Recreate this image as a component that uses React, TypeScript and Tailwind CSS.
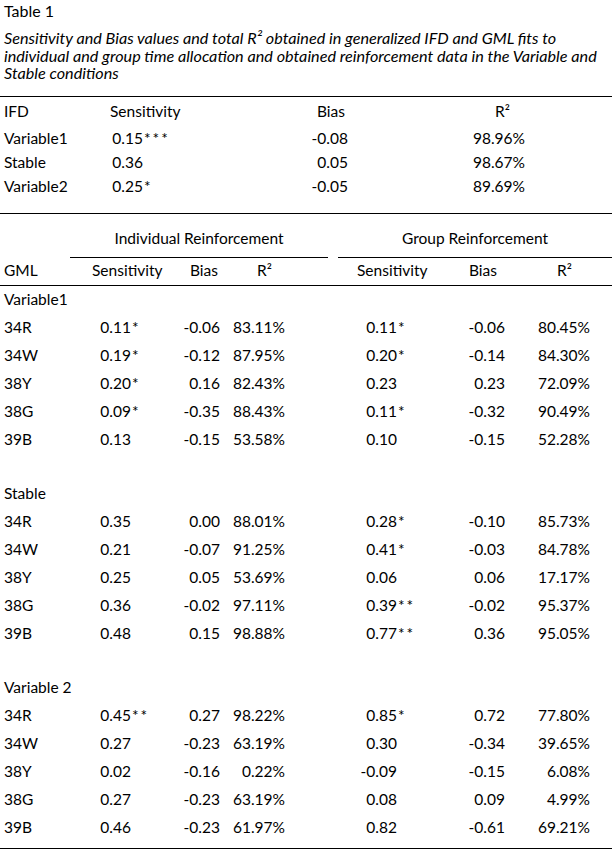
import React from 'react';

type Row2 = [string, string, string, string, string, string, string];

const variable1: Row2[] = [
  ['34R', '0.11*', '-0.06', '83.11%', '0.11*', '-0.06', '80.45%'],
  ['34W', '0.19*', '-0.12', '87.95%', '0.20*', '-0.14', '84.30%'],
  ['38Y', '0.20*', '0.16', '82.43%', '0.23', '0.23', '72.09%'],
  ['38G', '0.09*', '-0.35', '88.43%', '0.11*', '-0.32', '90.49%'],
  ['39B', '0.13', '-0.15', '53.58%', '0.10', '-0.15', '52.28%'],
];

const stable: Row2[] = [
  ['34R', '0.35', '0.00', '88.01%', '0.28*', '-0.10', '85.73%'],
  ['34W', '0.21', '-0.07', '91.25%', '0.41*', '-0.03', '84.78%'],
  ['38Y', '0.25', '0.05', '53.69%', '0.06', '0.06', '17.17%'],
  ['38G', '0.36', '-0.02', '97.11%', '0.39**', '-0.02', '95.37%'],
  ['39B', '0.48', '0.15', '98.88%', '0.77**', '0.36', '95.05%'],
];

const variable2: Row2[] = [
  ['34R', '0.45**', '0.27', '98.22%', '0.85*', '0.72', '77.80%'],
  ['34W', '0.27', '-0.23', '63.19%', '0.30', '-0.34', '39.65%'],
  ['38Y', '0.02', '-0.16', '0.22%', '-0.09', '-0.15', '6.08%'],
  ['38G', '0.27', '-0.23', '63.19%', '0.08', '0.09', '4.99%'],
  ['39B', '0.46', '-0.23', '61.97%', '0.82', '-0.61', '69.21%'],
];

const ifdRows = [
  ['Variable1', '0.15***', '-0.08', '98.96%'],
  ['Stable', '0.36', '0.05', '98.67%'],
  ['Variable2', '0.25*', '-0.05', '89.69%'],
];

// splits "0.45**" into number and stars so the decimals line up
function Sens({ value, width }: { value: string; width: string }) {
  const num = value.replace(/\*+$/, '');
  const stars = value.slice(num.length);
  return (
    <div className="flex">
      <span className={`${width} text-right`}>{num}</span>
      {stars && <span className="tracking-[2px] pl-[1px]">{stars}</span>}
    </div>
  );
}

function GmlRow({ row }: { row: Row2 }) {
  return (
    <div className="flex h-[28px] items-center">
      <div className="w-[82px] pl-1">{row[0]}</div>
      <div className="w-[83px]">
        <Sens value={row[1]} width="w-[49px]" />
      </div>
      <div className="w-[60px] text-right pr-[5px]">{row[2]}</div>
      <div className="w-[102px] text-right pr-[42px]">{row[3]}</div>
      <div className="w-[8px]" />
      <div className="w-[95px]">
        <Sens value={row[4]} width="w-[62px]" />
      </div>
      <div className="w-[80px] text-right pr-[5px]">{row[5]}</div>
      <div className="w-[102px] text-right pr-[22px]">{row[6]}</div>
    </div>
  );
}

function Section({ title, rows }: { title: string; rows: Row2[] }) {
  return (
    <div>
      <div className="h-[28px] flex items-center pl-1">{title}</div>
      {rows.map((r) => (
        <GmlRow key={title + r[0]} row={r} />
      ))}
    </div>
  );
}

export default function App() {
  return (
    <div className="w-[615px] h-[854px] bg-white text-black text-[15.5px] font-['Lato',sans-serif] overflow-hidden">
      <div className="pl-1 pt-[1px] leading-[20px] text-[16px]">Table 1</div>
      <p className="pl-1 mt-[8px] italic text-[16.2px] leading-[17.5px]">
        Sensitivity and Bias values and total R² obtained in generalized IFD and GML fits to
        <br />
        individual and group time allocation and obtained reinforcement data in the Variable and
        <br />
        Stable conditions
      </p>

      {/* IFD table */}
      <div className="mt-[14px] w-[612px] border-t border-b border-black pb-[14px]">
        <div className="flex h-[30px] items-center">
          <div className="w-[103px] pl-1">IFD</div>
          <div className="w-[180px] pl-[7px]">Sensitivity</div>
          <div className="w-[65px] text-right pr-[3px]">Bias</div>
          <div className="w-[180px] text-right pr-[18px]">R²</div>
        </div>
        {ifdRows.map((r) => (
          <div key={r[0]} className="flex h-[24px] items-center">
            <div className="w-[103px] pl-1">{r[0]}</div>
            <div className="w-[180px]">
              <Sens value={r[1]} width="w-[40px]" />
            </div>
            <div className="w-[65px] text-right">{r[2]}</div>
            <div className="w-[180px] text-right pr-[3px]">{r[3]}</div>
          </div>
        ))}
      </div>

      {/* GML table */}
      <div className="w-[612px] border-b border-black pb-[6px]">
        <div className="flex h-[44px] items-end">
          <div className="w-[70px]" />
          <div className="w-[258px] border-b border-black text-center pb-[6px]">Individual Reinforcement</div>
          <div className="w-[10px]" />
          <div className="w-[274px] border-b border-black text-center pb-[6px]">Group Reinforcement</div>
        </div>
        <div className="flex h-[28px] items-center border-b border-black">
          <div className="w-[82px] pl-1">GML</div>
          <div className="w-[83px] pl-[10px]">Sensitivity</div>
          <div className="w-[60px] text-right pr-[7px]">Bias</div>
          <div className="w-[102px] text-right pr-[55px]">R²</div>
          <div className="w-[8px]" />
          <div className="w-[95px] pl-[22px]">Sensitivity</div>
          <div className="w-[80px] text-right pr-[13px]">Bias</div>
          <div className="w-[102px] text-right pr-[40px]">R²</div>
        </div>
        <Section title="Variable1" rows={variable1} />
        <div className="h-[26px]" />
        <Section title="Stable" rows={stable} />
        <div className="h-[26px]" />
        <Section title="Variable 2" rows={variable2} />
      </div>
    </div>
  );
}
